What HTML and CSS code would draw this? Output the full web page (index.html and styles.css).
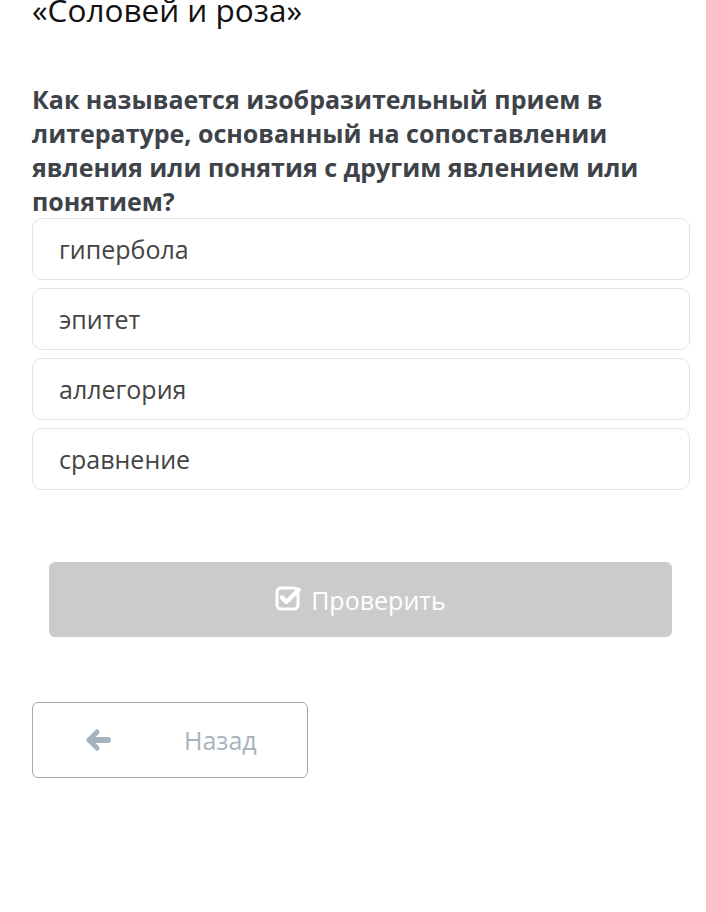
FILE: index.html
```html
<!DOCTYPE html>
<html lang="ru">
<head>
<meta charset="utf-8">
<link rel="stylesheet" href="styles.css">
</head>
<body>
<div class="page">
  <h1 class="title">«Соловей и роза»</h1>
  <h2 class="question">Как называется изобразительный прием в литературе, основанный на сопоставлении явления или понятия с другим явлением или понятием?</h2>
  <div class="options">
    <div class="option">гипербола</div>
    <div class="option">эпитет</div>
    <div class="option">аллегория</div>
    <div class="option">сравнение</div>
  </div>
  <div class="check-wrap">
    <button class="check">
      <svg class="check-icon" viewBox="0 0 26 26" width="26" height="26">
        <rect x="2" y="3" width="21" height="21" rx="4" fill="none" stroke="#fff" stroke-width="3"/>
        <path d="M7 12.5 L11.5 17 L23.5 5" fill="none" stroke="#fff" stroke-width="4.5" stroke-linecap="round" stroke-linejoin="round"/>
      </svg>
      <span>Проверить</span>
    </button>
  </div>
  <button class="back">
    <svg class="back-icon" viewBox="0 0 26 22" width="26" height="22">
      <path d="M12 3 L4 11 L12 19" fill="none" stroke="#a3b3bf" stroke-width="5" stroke-linecap="round" stroke-linejoin="round"/>
      <path d="M5 11 H23" fill="none" stroke="#a3b3bf" stroke-width="6" stroke-linecap="round"/>
    </svg>
    <span class="back-text">Назад</span>
  </button>
</div>
</body>
</html>
```

FILE: styles.css
```css
html, body {
  margin: 0;
  padding: 0;
  background: #fff;
}
.page {
  padding: 0 16px 0 32px;
  font-family: "Open Sans", "Noto Sans", sans-serif;
  color: #3b3f44;
}
.title {
  margin: -11px 0 0 0;
  font-size: 31.5px;
  line-height: 41px;
  font-weight: 400;
  color: #111;
}
.question {
  margin: 52px 0 0 0;
  font-size: 25px;
  line-height: 34px;
  font-weight: 700;
  color: #3e4349;
}
.options {
  display: flex;
  flex-direction: column;
  gap: 8px;
}
.option {
  height: 60px;
  border: 1px solid #e2e2e2;
  border-radius: 10px;
  display: flex;
  align-items: center;
  padding: 0 26px;
  font-size: 25px;
  color: #444;
}
.check-wrap {
  padding: 72px 18px 0 17px;
}
.check {
  width: 100%;
  height: 75px;
  border: none;
  border-radius: 6px;
  background: #cbcbcb;
  color: #fff;
  font-family: "Open Sans", "Noto Sans", sans-serif;
  font-size: 25px;
  display: flex;
  align-items: center;
  justify-content: center;
  gap: 10px;
  padding: 0;
}
.check-icon {
  display: block;
  margin-top: -4px;
}
.back {
  margin-top: 65px;
  width: 276px;
  height: 76px;
  border: 1px solid #a9a9a9;
  border-radius: 6px;
  background: #fff;
  display: flex;
  align-items: center;
  padding: 0 0 0 52px;
  font-family: "Open Sans", "Noto Sans", sans-serif;
}
.back-icon {
  display: block;
}
.back-text {
  margin-left: 73px;
  font-size: 25px;
  color: #a7b3bc;
}
```
